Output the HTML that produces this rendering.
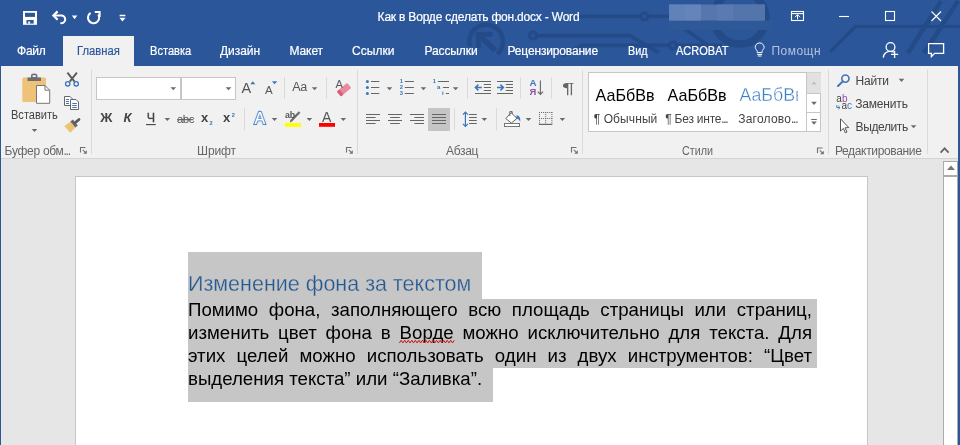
<!DOCTYPE html>
<html lang="ru">
<head>
<meta charset="utf-8">
<title>Как в Ворде сделать фон.docx - Word</title>
<style>
*{margin:0;padding:0;box-sizing:border-box}
html,body{width:960px;height:445px;overflow:hidden;background:#e6e6e6}
body{position:relative;font-family:"Liberation Sans","DejaVu Sans",sans-serif;font-size:12px;color:#444}
.abs{position:absolute}
#titlebar{position:absolute;left:0;top:0;width:960px;height:66px;background:#2b579a;overflow:hidden}
#ribbon{position:absolute;left:1px;top:66px;width:958px;height:93px;background:#f1f1f1;border-bottom:1px solid #d4d4d4}
#doc{position:absolute;left:1px;top:159px;width:958px;height:286px;background:#e6e6e6}
#lborder{position:absolute;left:0;top:66px;width:1.3px;height:379px;background:#2b579a}
#rborder{position:absolute;left:958.4px;top:66px;width:1.6px;height:379px;background:#2b579a}
.t{position:absolute;white-space:nowrap;line-height:14px;height:14px}
.tab{position:absolute;top:44px;color:#fff;font-size:12px;white-space:nowrap;line-height:14px;-webkit-text-stroke:0.2px currentColor}
#tabactive{position:absolute;left:63px;top:36px;width:71px;height:30px;background:#f1f1f1}
#page{position:absolute;left:75px;top:176px;width:793px;height:280px;background:#fff;border:1px solid #c6c6c6}
.hl{position:absolute;background:#c6c6c6}
.pl{position:absolute;left:188px;width:624px;font-size:18.67px;line-height:23px;height:23px;color:#000;text-align:justify;text-align-last:justify;white-space:nowrap}
.it{position:absolute;white-space:nowrap}
.sep{position:absolute;width:1px;background:#dadada}
.glabel{position:absolute;top:144px;font-size:12px;color:#666;white-space:nowrap;line-height:14px}
</style>
</head>
<body>
<div id="root" style="position:absolute;left:0;top:0;width:960px;height:445px;will-change:transform">
<div id="titlebar"></div>
<div id="tabactive"></div>
<div id="ribbon"></div>
<div id="doc"></div>
<div id="lborder"></div>
<div id="rborder"></div>

<!-- overlay svg: title bar decorations and icons -->
<svg class="abs" style="left:0;top:0" width="960" height="66" viewBox="0 0 960 66">
 <g id="deco" fill="none" stroke="#244b87" stroke-width="3.6">
  <!-- circle with arrow -->
  <path d="M470.1 46.4 A16.8 16.8 0 1 1 497.4 54.0" stroke-width="4.5"/>
  <path d="M478.3 47.8 V34.2 H492.8" stroke-width="5" stroke-linejoin="miter"/>
  <path d="M480 36 L495.5 50.5" stroke-width="5.5"/>
  <!-- line 1 -->
  <path d="M579 16.4 H640.6"/><circle cx="644.4" cy="16.4" r="3.5" stroke-width="3.3"/><path d="M648.2 16.4 H672"/>
  <!-- line 2 -->
  <circle cx="533" cy="35.4" r="3.5" stroke-width="3.3"/><path d="M536.8 35.6 H630 L659 52.6"/>
  <!-- line 3 -->
  <path d="M562 56 L582 45.4 H669.2"/><circle cx="673" cy="45.4" r="3.5" stroke-width="3.3"/>
  <!-- right deco -->
  <circle cx="739.7" cy="17.8" r="26.2" stroke-width="7.5"/>
  <path d="M677 45.4 H722 M684 28.6 L708.5 45.4" />
  <path d="M830 52 L855.5 26.5 H960" />
  <path d="M908 53 L941 1 M924 53 L958 1" stroke-width="4.5"/>
 </g>
 <!-- blurred account name -->
 <rect x="669" y="20.5" width="103" height="9.5" fill="#2e5898"/>
 <rect x="669" y="4.5" width="96" height="16" fill="#5577ae"/>
 <rect x="669" y="4.5" width="16" height="16" fill="#5f82b8"/>
 <rect x="685" y="4.5" width="16" height="16" fill="#6585ba"/>
 <rect x="717" y="4.5" width="16" height="16" fill="#5a7bb2"/>
 <rect x="733" y="4.5" width="32" height="16" fill="#5375ac"/>
 <!-- QAT icons -->
 <rect x="23" y="11" width="14" height="13.8" fill="#fff"/>
 <rect x="25" y="12.8" width="10" height="4.1" fill="#2b579a"/>
 <rect x="26.5" y="20" width="7.2" height="3.6" fill="#2b579a"/>
 <rect x="28.2" y="21.5" width="1.9" height="2.1" fill="#fff"/>
 <g fill="none" stroke="#fff" stroke-width="2.2" stroke-linejoin="miter">
  <path d="M57.6 11.4 L53.4 15.6 L57.6 19.8"/>
  <path d="M53.8 15.6 H61.2 A3.8 3.8 0 0 1 61.6 23.2 L60.4 23.1" stroke-width="2"/>
 </g>
 <path d="M71.8 15.6 H77.4 L74.6 19.2Z" fill="#fff"/>
 <g fill="none" stroke="#fff" stroke-width="2">
  <path d="M90.6 12.9 A5.6 5.6 0 1 0 98.3 14.6"/>
  <path d="M94.8 12 H99.6 V17"/>
 </g>
 <path d="M119.6 14.8 H125.4 V16.3 H119.6Z M119.4 17.8 H125.6 L122.5 21.4Z" fill="#fff"/>
 <!-- window buttons -->
 <g fill="none" stroke="#fff" stroke-width="1.1">
  <rect x="791.5" y="11.5" width="12" height="9"/>
  <path d="M791.5 13.6 H803.5" />
  <path d="M797.5 19.4 V14.8 M795 17.2 L797.5 14.7 L800 17.2" stroke-width="1"/>
  <path d="M839 16.5 H849"/>
  <rect x="885.5" y="11.5" width="9" height="9"/>
  <path d="M931.5 11.5 L941 21 M941 11.5 L931.5 21"/>
 </g>
 <!-- bulb -->
 <g fill="none" stroke="#fff" stroke-width="1">
  <path d="M757.2 52.6 V51.4 C757.2 50 755.2 49.2 755.2 47.4 A4.45 4.45 0 0 1 764.1 47.4 C764.1 49.2 762.1 50 762.1 51.4 V52.6 Z"/>
  <path d="M757.2 54.4 H762.1 M757.8 56 H761.5"/>
 </g>
 <!-- share -->
 <g fill="none" stroke="#fff" stroke-width="1.3">
  <circle cx="890.5" cy="47" r="4.4"/>
  <path d="M883.3 57.6 C883.8 53 887 51.4 890.5 51.4 C892 51.4 893 51.7 894 52.2"/>
  <path d="M894.6 50.8 V58 M891 54.4 H898.2"/>
 </g>
 <!-- comment -->
 <path d="M928.6 43.6 H943.6 V53.4 H934.6 L931.4 56.6 V53.4 H928.6Z" fill="none" stroke="#fff" stroke-width="1.3"/>
</svg>

<!-- title -->
<div class="t" id="title" style="left:377.6px;top:10px;color:#fff;font-size:12px;-webkit-text-stroke:0.2px #fff;letter-spacing:-0.2px">Как в Ворде сделать фон.docx - Word</div>

<!-- tabs -->
<div class="tab" style="left:17px;letter-spacing:-0.23px">Файл</div>
<div class="tab" style="left:76.8px;color:#2b579a;transform:scaleX(0.937);transform-origin:0 0">Главная</div>
<div class="tab" style="left:149.5px;transform:scaleX(0.924);transform-origin:0 0">Вставка</div>
<div class="tab" style="left:220px;letter-spacing:-0.06px">Дизайн</div>
<div class="tab" style="left:289.5px;letter-spacing:-0.09px">Макет</div>
<div class="tab" style="left:352px;letter-spacing:0.04px">Ссылки</div>
<div class="tab" style="left:424.5px;letter-spacing:-0.11px">Рассылки</div>
<div class="tab" style="left:507.5px;letter-spacing:-0.16px">Рецензирование</div>
<div class="tab" style="left:627.5px;transform:scaleX(0.899);transform-origin:0 0">Вид</div>
<div class="tab" style="left:676px;transform:scaleX(0.919);transform-origin:0 0">ACROBAT</div>
<div class="tab" style="left:771.5px;color:#b3c2dc;-webkit-text-stroke:0;letter-spacing:0.46px">Помощн</div>


<!-- ribbon separators -->
<div class="sep" style="left:91px;top:70px;height:84px"></div>
<div class="sep" style="left:357px;top:70px;height:84px"></div>
<div class="sep" style="left:582px;top:70px;height:84px"></div>
<div class="sep" style="left:828px;top:70px;height:84px"></div>
<div class="sep" style="left:927px;top:70px;height:84px"></div>
<div class="sep" style="left:284px;top:77px;height:22px"></div>
<div class="sep" style="left:326px;top:77px;height:22px"></div>
<div class="sep" style="left:244px;top:108px;height:22px"></div>
<div class="sep" style="left:467px;top:77px;height:22px"></div>
<div class="sep" style="left:520px;top:77px;height:22px"></div>
<div class="sep" style="left:551px;top:77px;height:22px"></div>
<div class="sep" style="left:454px;top:108px;height:22px"></div>
<div class="sep" style="left:496px;top:108px;height:22px"></div>

<!-- group labels -->
<div class="glabel" style="left:4.6px;letter-spacing:-0.29px">Буфер обм<span style="letter-spacing:-1.3px">...</span></div>
<div class="glabel" style="left:197px;letter-spacing:-0.1px">Шрифт</div>
<div class="glabel" style="left:446px;letter-spacing:-0.33px">Абзац</div>
<div class="glabel" style="left:681.9px;transform:scaleX(0.896);transform-origin:0 0">Стили</div>
<div class="glabel" style="left:834.9px;letter-spacing:-0.34px">Редактирование</div>

<!-- clipboard -->
<div class="t" style="left:10.6px;top:108px;color:#444;transform:scaleX(0.921);transform-origin:0 0">Вставить</div>

<!-- font boxes -->
<div class="abs" style="left:96px;top:77px;width:85px;height:23px;background:#fff;border:1px solid #c6c6c6"></div>
<div class="abs" style="left:181px;top:77px;width:55px;height:23px;background:#fff;border:1px solid #c6c6c6"></div>

<!-- styles gallery -->
<div class="abs" style="left:588px;top:72px;width:233px;height:60px;background:#fff;border:1px solid #c6c6c6"></div>
<div class="t" style="left:595.6px;top:85px;font-size:16.1px;line-height:20px;height:20px;color:#000">АаБбВв</div>
<div class="t" style="left:667.6px;top:85px;font-size:16.1px;line-height:20px;height:20px;color:#000">АаБбВв</div>
<div class="t" style="left:739.4px;top:84px;font-size:17.8px;line-height:22px;height:22px;color:#3a7cc6;width:59px;overflow:hidden;-webkit-text-stroke:0.4px #fff">АаБбВв</div>
<div class="t" style="left:593.7px;top:112px;color:#444;letter-spacing:0.1px">¶ Обычный</div>
<div class="t" style="left:665.3px;top:112px;color:#444;letter-spacing:-0.23px">¶ Без инте<span style="letter-spacing:-1.3px">...</span></div>
<div class="t" style="left:738.3px;top:112px;color:#444;letter-spacing:0.2px">Заголово<span style="letter-spacing:-1.3px">...</span></div>

<!-- editing -->
<div class="t" style="left:855.6px;top:74px;color:#444;letter-spacing:-0.21px">Найти</div>
<div class="t" style="left:855.2px;top:97px;color:#444;letter-spacing:-0.17px">Заменить</div>
<div class="t" style="left:855.6px;top:120px;color:#444;letter-spacing:-0.39px">Выделить</div>

<!-- ribbon icons -->
<svg class="abs" style="left:0;top:66px" width="960" height="92" viewBox="0 66 960 92">
<g>
 <rect x="22.3" y="77.5" width="23.7" height="24.5" rx="1.5" fill="#eec278"/>
 <path d="M27.5 81 V77.6 H31 V76 A3.2 2.4 0 0 1 37.4 76 V77.6 H41 V81Z" fill="#6e6e6e"/>
 <rect x="32.6" y="75.2" width="3.2" height="1.8" fill="#f1f1f1"/>
 <path d="M36.5 85.5 H45 L49.7 90.2 V103.3 H36.5Z" fill="#fff" stroke="#777" stroke-width="1"/>
 <path d="M45 85.5 V90.2 H49.7" fill="none" stroke="#777" stroke-width="1"/>
</g>
<path d="M31.7 129.0 H37.3 L34.5 132.1Z" fill="#6a6a6a"/>
<g fill="none">
 <path d="M67.4 72.6 L74.6 81.6 M76.9 72.6 L69.7 81.6" stroke="#5a5a5a" stroke-width="1.9"/>
 <circle cx="67.7" cy="83.8" r="2.2" stroke="#3b76b9" stroke-width="1.3"/>
 <circle cx="76.2" cy="83.8" r="2.2" stroke="#3b76b9" stroke-width="1.3"/>
</g>
<g fill="#fff" stroke="#666" stroke-width="1">
 <path d="M64.5 96.5 H70 L72.5 99 V105.5 H64.5Z"/>
 <path d="M70.5 99.5 H76 L78.5 102 V109.5 H70.5Z"/>
 <path d="M66 99.5 H69 M66 101.5 H69 M66 103.5 H69" stroke="#3b76b9"/>
 <path d="M72.3 103.5 H76.8 M72.3 105.5 H76.8 M72.3 107.5 H76.8" stroke="#3b76b9"/>
</g>
<g>
 <path d="M64.2 126 L70.8 121.4 L75.6 127.2 L70.3 132.8 Z" fill="#eec278"/>
 <path d="M70.4 121.6 L72.9 119.6 L77.8 125.4 L75.4 127.6Z" fill="#666"/>
 <path d="M75.4 122.6 L79 119.5" stroke="#595959" stroke-width="2.7" stroke-linecap="round"/>
</g>
<path d="M80.5 152.5 V147.5 H85.5" fill="none" stroke="#707070" stroke-width="1.1"/><path d="M82.8 149.8 L85.6 152.6" fill="none" stroke="#707070" stroke-width="1.1"/><path d="M83.2 153.8 H86.8 V150.2Z" fill="#707070"/>
<path d="M170.5 87.2 H176.1 L173.3 90.3Z" fill="#6a6a6a"/>
<path d="M225.7 87.2 H231.3 L228.5 90.3Z" fill="#6a6a6a"/>
<path d="M250.3 84.2 H255.3 L252.8 81.2Z" fill="#3b76b9"/>
<path d="M272 81.2 H277.2 L274.6 84.2Z" fill="#3b76b9"/>
<path d="M311.8 87.2 H317.4 L314.6 90.3Z" fill="#6a6a6a"/>
<g transform="rotate(-40 344 89.6)"><rect x="337.2" y="86.4" width="13.6" height="6.6" rx="1.2" fill="#e98a9e"/><rect x="337.2" y="86.4" width="3.4" height="6.6" rx="1" fill="#d9607c"/></g>
<path d="M146 124.6 H155.8" stroke="#444" stroke-width="1.1"/>
<path d="M164.5 118.0 H170.1 L167.3 121.1Z" fill="#6a6a6a"/>
<path d="M177 119.7 H193.3" stroke="#555" stroke-width="1"/>
<path d="M271.7 118.0 H277.3 L274.5 121.1Z" fill="#6a6a6a"/>
<path d="M300.4 112.8 L292 121.4 L289.8 122.4 L290.4 120 L298.8 111.2Z" fill="#6a6a6a"/>
<rect x="285" y="123" width="16" height="3.8" fill="#ffff00"/>
<path d="M306.6 118.0 H312.2 L309.4 121.1Z" fill="#6a6a6a"/>
<rect x="319" y="123" width="16" height="3.8" fill="#ff0000"/>
<path d="M340.5 118.0 H346.1 L343.3 121.1Z" fill="#6a6a6a"/>
<path d="M346.5 152.5 V147.5 H351.5" fill="none" stroke="#707070" stroke-width="1.1"/><path d="M348.8 149.8 L351.6 152.6" fill="none" stroke="#707070" stroke-width="1.1"/><path d="M349.2 153.8 H352.8 V150.2Z" fill="#707070"/>
<circle cx="367.4" cy="81.5" r="1.5" fill="#3b76b9"/>
<path d="M371 81.5 H379.3 M404.8 81.5 H413.9" stroke="#666" stroke-width="1"/>
<circle cx="367.4" cy="87.5" r="1.5" fill="#3b76b9"/>
<path d="M371 87.5 H379.3 M404.8 87.5 H413.9" stroke="#666" stroke-width="1"/>
<circle cx="367.4" cy="93.5" r="1.5" fill="#3b76b9"/>
<path d="M371 93.5 H379.3 M404.8 93.5 H413.9" stroke="#666" stroke-width="1"/>
<path d="M386.7 87.2 H392.3 L389.5 90.3Z" fill="#6a6a6a"/>
<path d="M420.6 87.2 H426.2 L423.4 90.3Z" fill="#6a6a6a"/>
<path d="M437.9 81.5 H449 M442.9 87.5 H449 M445.8 93.5 H449" stroke="#666" stroke-width="1"/>
<path d="M452.8 87.2 H458.4 L455.6 90.3Z" fill="#6a6a6a"/>
<path d="M475.0 81.5 H491.0 M475.0 93.5 H491.0" stroke="#666" stroke-width="1"/>
<path d="M483.8 84.5 H491.0 M483.8 87.5 H491.0 M483.8 90.5 H491.0" stroke="#666" stroke-width="1"/>
<path d="M497.0 81.5 H513.0 M497.0 93.5 H513.0" stroke="#666" stroke-width="1"/>
<path d="M505.8 84.5 H513.0 M505.8 87.5 H513.0 M505.8 90.5 H513.0" stroke="#666" stroke-width="1"/>
<path d="M475.4 87.5 H481.8 M478.4 84.6 L475.4 87.5 L478.4 90.4" fill="none" stroke="#3b76b9" stroke-width="1.5"/>
<path d="M497 87.5 H503.4 M500.4 84.6 L503.4 87.5 L500.4 90.4" fill="none" stroke="#3b76b9" stroke-width="1.5"/>
<path d="M540.4 80.4 V94.2 M537.8 91.6 L540.4 94.4 L543 91.6" fill="none" stroke="#666" stroke-width="1.1"/>
<path d="M366.0 114.5 H380.0 M366.0 117.5 H375.6 M366.0 120.5 H380.0 M366.0 123.5 H375.6" stroke="#666" stroke-width="1"/>
<path d="M388.0 114.5 H402.0 M390.2 117.5 H399.8 M388.0 120.5 H402.0 M390.2 123.5 H399.8" stroke="#666" stroke-width="1"/>
<path d="M410.0 114.5 H424.0 M414.4 117.5 H424.0 M410.0 120.5 H424.0 M414.4 123.5 H424.0" stroke="#666" stroke-width="1"/>
<rect x="428" y="108" width="22" height="23" fill="#c5c5c5"/>
<path d="M432.0 114.5 H446.0 M432.0 117.5 H446.0 M432.0 120.5 H446.0 M432.0 123.5 H446.0" stroke="#666" stroke-width="1"/>
<path d="M465.4 112 V126.4 M462.9 114.6 L465.4 112 L467.9 114.6 M462.9 123.8 L465.4 126.4 L467.9 123.8" fill="none" stroke="#3b76b9" stroke-width="1.2"/>
<path d="M469 114.5 H476.8 M469 117.5 H476.8 M469 120.5 H476.8 M469 123.5 H476.8" stroke="#666" stroke-width="1"/>
<path d="M481.5 118.0 H487.1 L484.3 121.1Z" fill="#6a6a6a"/>
<rect x="504.5" y="123.5" width="15" height="3" fill="#fff" stroke="#777" stroke-width="1"/>
<path d="M511 112.6 L517 118.4 L511.4 123 L505.8 118.6Z" fill="#fff" stroke="#666" stroke-width="1"/>
<path d="M509.8 116 V111.6 H512.2 V114" fill="none" stroke="#666" stroke-width="1"/>
<path d="M516.6 115.2 C519.6 115.6 520.8 118.4 520.2 121.8 C519 119.6 518 118.8 516.2 118.6Z" fill="#3b76b9"/>
<path d="M525.7 118.0 H531.3 L528.5 121.1Z" fill="#6a6a6a"/>
<path d="M539 112.5 H552.4 M539 118.5 H552.4 M539.5 112 V124 M545.7 112 V124 M551.9 112 V124" stroke="#666" stroke-width="1" stroke-dasharray="1 1.05"/>
<path d="M538.8 124.4 H552.4" stroke="#666" stroke-width="1.2"/>
<path d="M559.6 118.0 H565.2 L562.4 121.1Z" fill="#6a6a6a"/>
<path d="M571.5 152.5 V147.5 H576.5" fill="none" stroke="#707070" stroke-width="1.1"/><path d="M573.8 149.8 L576.6 152.6" fill="none" stroke="#707070" stroke-width="1.1"/><path d="M574.2 153.8 H577.8 V150.2Z" fill="#707070"/>
<rect x="807" y="72.5" width="14" height="21" fill="#e1e1e1"/>
<path d="M806.5 72.5 V131.5 M806.5 93.5 H821 M806.5 112.5 H821" fill="none" stroke="#c6c6c6" stroke-width="1"/>
<path d="M811.4 84.4 H816.6 L814 81.4Z" fill="#bdbdbd"/>
<path d="M811.2 101.8 H816.8 L814.0 104.9Z" fill="#6a6a6a"/>
<path d="M811.2 119.5 H816.8" stroke="#6a6a6a" stroke-width="1"/>
<path d="M811.2 121.6 H816.8 L814.0 124.7Z" fill="#6a6a6a"/>
<path d="M817.5 153.0 V148.0 H822.5" fill="none" stroke="#707070" stroke-width="1.1"/><path d="M819.8 150.3 L822.6 153.1" fill="none" stroke="#707070" stroke-width="1.1"/><path d="M820.2 154.3 H823.8 V150.7Z" fill="#707070"/>
<circle cx="845.4" cy="78.6" r="3.6" fill="none" stroke="#3b76b9" stroke-width="1.6"/>
<path d="M842.8 81.4 L838 86" stroke="#3b76b9" stroke-width="2" stroke-linecap="round"/>
<path d="M898.7 78.8 H904.3 L901.5 81.9Z" fill="#6a6a6a"/>
<path d="M836.8 105.2 V107.6 H839.8 M838.4 106 L840 107.6 L838.4 109.2" fill="none" stroke="#3b76b9" stroke-width="1"/>
<path d="M840.5 118.8 V131 L843.4 128.4 L845.4 132.8 L847 132 L845 127.8 L848.8 127.6Z" fill="#fff" stroke="#555" stroke-width="1" stroke-linejoin="round"/>
<path d="M910.8 125.2 H916.4 L913.6 128.3Z" fill="#6a6a6a"/>
<path d="M940.6 152.6 L944.6 148.4 L948.6 152.6" fill="none" stroke="#666" stroke-width="1.8"/>
</svg>
<div class="it" style="left:241.6px;top:79.3px;font-size:14.5px;line-height:19px;height:19px;color:#555;">A</div>
<div class="it" style="left:264.9px;top:81.8px;font-size:11.5px;line-height:16px;height:16px;color:#555;">A</div>
<div class="it" style="left:292.2px;top:79.4px;font-size:12.5px;line-height:17px;height:17px;color:#555;letter-spacing:-0.3px">Aa</div>
<div class="it" style="left:335.5px;top:77.2px;font-size:11.2px;line-height:15px;height:15px;color:#5a5a5a;">A</div>
<div class="it" style="left:100.3px;top:109.3px;font-size:13.4px;line-height:18px;height:18px;color:#444;font-weight:bold">Ж</div>
<div class="it" style="left:123.6px;top:109.4px;font-size:13px;line-height:18px;height:18px;color:#444;font-weight:bold;font-style:italic">К</div>
<div class="it" style="left:146.7px;top:110.1px;font-size:12.5px;line-height:17px;height:17px;color:#444;-webkit-text-stroke:0.3px #444">Ч</div>
<div class="it" style="left:176.9px;top:110.9px;font-size:11.5px;line-height:16px;height:16px;color:#555;letter-spacing:-0.5px">abc</div>
<div class="it" style="left:201.1px;top:109.4px;font-size:13px;line-height:18px;height:18px;color:#444;font-weight:bold">x</div>
<div class="it" style="left:209.4px;top:118.8px;font-size:5.6px;line-height:9px;height:9px;color:#3b76b9;font-weight:bold">2</div>
<div class="it" style="left:223.1px;top:109.4px;font-size:13px;line-height:18px;height:18px;color:#444;font-weight:bold">x</div>
<div class="it" style="left:231.7px;top:110.6px;font-size:5.6px;line-height:9px;height:9px;color:#3b76b9;font-weight:bold">2</div>
<div class="it" style="left:254.6px;top:108.0px;font-size:16px;line-height:21px;height:21px;color:#fff;-webkit-text-stroke:2px #3b76b9;paint-order:stroke fill;text-shadow:0 0 2px #8fb5e2,0 0 3px #a9c6ea">A</div>
<div class="it" style="left:285.1px;top:108.8px;font-size:8.8px;line-height:13px;height:13px;color:#555;font-weight:bold;letter-spacing:-0.3px">ab</div>
<div class="it" style="left:322.0px;top:108.2px;font-size:14px;line-height:19px;height:19px;color:#555;">A</div>
<div class="it" style="left:399.8px;top:77.2px;font-size:5.8px;line-height:9px;height:9px;color:#3b76b9;font-weight:bold">1</div>
<div class="it" style="left:399.8px;top:83.2px;font-size:5.8px;line-height:9px;height:9px;color:#3b76b9;font-weight:bold">2</div>
<div class="it" style="left:399.8px;top:89.2px;font-size:5.8px;line-height:9px;height:9px;color:#3b76b9;font-weight:bold">3</div>
<div class="it" style="left:432.7px;top:77.2px;font-size:5.8px;line-height:9px;height:9px;color:#3b76b9;font-weight:bold">1</div>
<div class="it" style="left:437.1px;top:82.9px;font-size:6px;line-height:9px;height:9px;color:#3b76b9;font-weight:bold">a</div>
<div class="it" style="left:442.0px;top:89.2px;font-size:6px;line-height:9px;height:9px;color:#3b76b9;font-weight:bold">i</div>
<div class="it" style="left:529.6px;top:76.4px;font-size:9.8px;line-height:14px;height:14px;color:#3b76b9;font-weight:bold">A</div>
<div class="it" style="left:529.4px;top:85.1px;font-size:9.4px;line-height:13px;height:13px;color:#8c4fa8;font-weight:bold">Я</div>
<div class="it" style="left:561.6px;top:76.9px;font-size:15.5px;line-height:21px;height:21px;color:#666;transform:scaleX(1.5);transform-origin:0 50%">¶</div>
<div class="it" style="left:836.2px;top:92.2px;font-size:10px;line-height:14px;height:14px;color:#444;">a</div>
<div class="it" style="left:841.9px;top:92.2px;font-size:10px;line-height:14px;height:14px;color:#8c4fa8;">b</div>
<div class="it" style="left:841.4px;top:99.3px;font-size:10px;line-height:14px;height:14px;color:#444;">a</div>
<div class="it" style="left:846.9px;top:99.3px;font-size:10px;line-height:14px;height:14px;color:#3b76b9;">c</div>
<!-- document -->
<div id="page"></div>
<div class="hl" style="left:188px;top:252px;width:294px;height:48px"></div>
<div class="hl" style="left:188px;top:299px;width:628.5px;height:69px"></div>
<div class="hl" style="left:188px;top:367px;width:305px;height:35px"></div>
<div class="t" id="heading" style="left:188px;top:270px;transform:translateY(-0.3px);font-size:21.5px;line-height:28px;height:28px;color:#235892;-webkit-text-stroke:0.3px #c6c6c6">Изменение фона за текстом</div>
<div class="pl" style="top:297.6px">Помимо фона, заполняющего всю площадь страницы или страниц,</div>
<div class="pl" style="top:320.6px">изменить цвет фона в Ворде можно исключительно для текста. Для</div>
<div class="pl" style="top:343.6px">этих целей можно использовать один из двух инструментов: “Цвет</div>
<div class="pl" style="top:366.6px;text-align-last:left">выделения текста” или “Заливка”.</div>

<svg class="abs" style="left:0;top:336px" width="960" height="10" viewBox="0 336 960 10"><path d="M399.40 342.9 L401.17 340.3 L402.94 342.9 L404.71 340.3 L406.48 342.9 L408.25 340.3 L410.02 342.9 L411.79 340.3 L413.56 342.9 L415.33 340.3 L417.10 342.9 L418.87 340.3 L420.64 342.9 L422.41 340.3 L424.18 342.9 L425.95 340.3 L427.72 342.9 L429.49 340.3 L431.26 342.9 L433.03 340.3 L434.80 342.9 L436.57 340.3 L438.34 342.9 L440.11 340.3 L441.88 342.9 L443.65 340.3 L445.42 342.9 L447.19 340.3 L448.96 342.9 L450.73 340.3 L452.50 342.9 L454.27 340.3" fill="none" stroke="#d00c0c" stroke-width="1" stroke-linejoin="round"/></svg>
<!-- scrollbar -->
<div class="abs" style="left:943px;top:176px;width:15px;height:270px;background:#fff;border:1px solid #ababab"></div>
<div class="abs" style="left:943px;top:161px;width:15px;height:15px;background:#fff;border:1px solid #ababab"></div>
<svg class="abs" style="left:947px;top:165px" width="8" height="6" viewBox="0 0 8 6"><path d="M0 5 L4 0.5 L8 5Z" fill="#777"/></svg>

</div>
</body>
</html>
